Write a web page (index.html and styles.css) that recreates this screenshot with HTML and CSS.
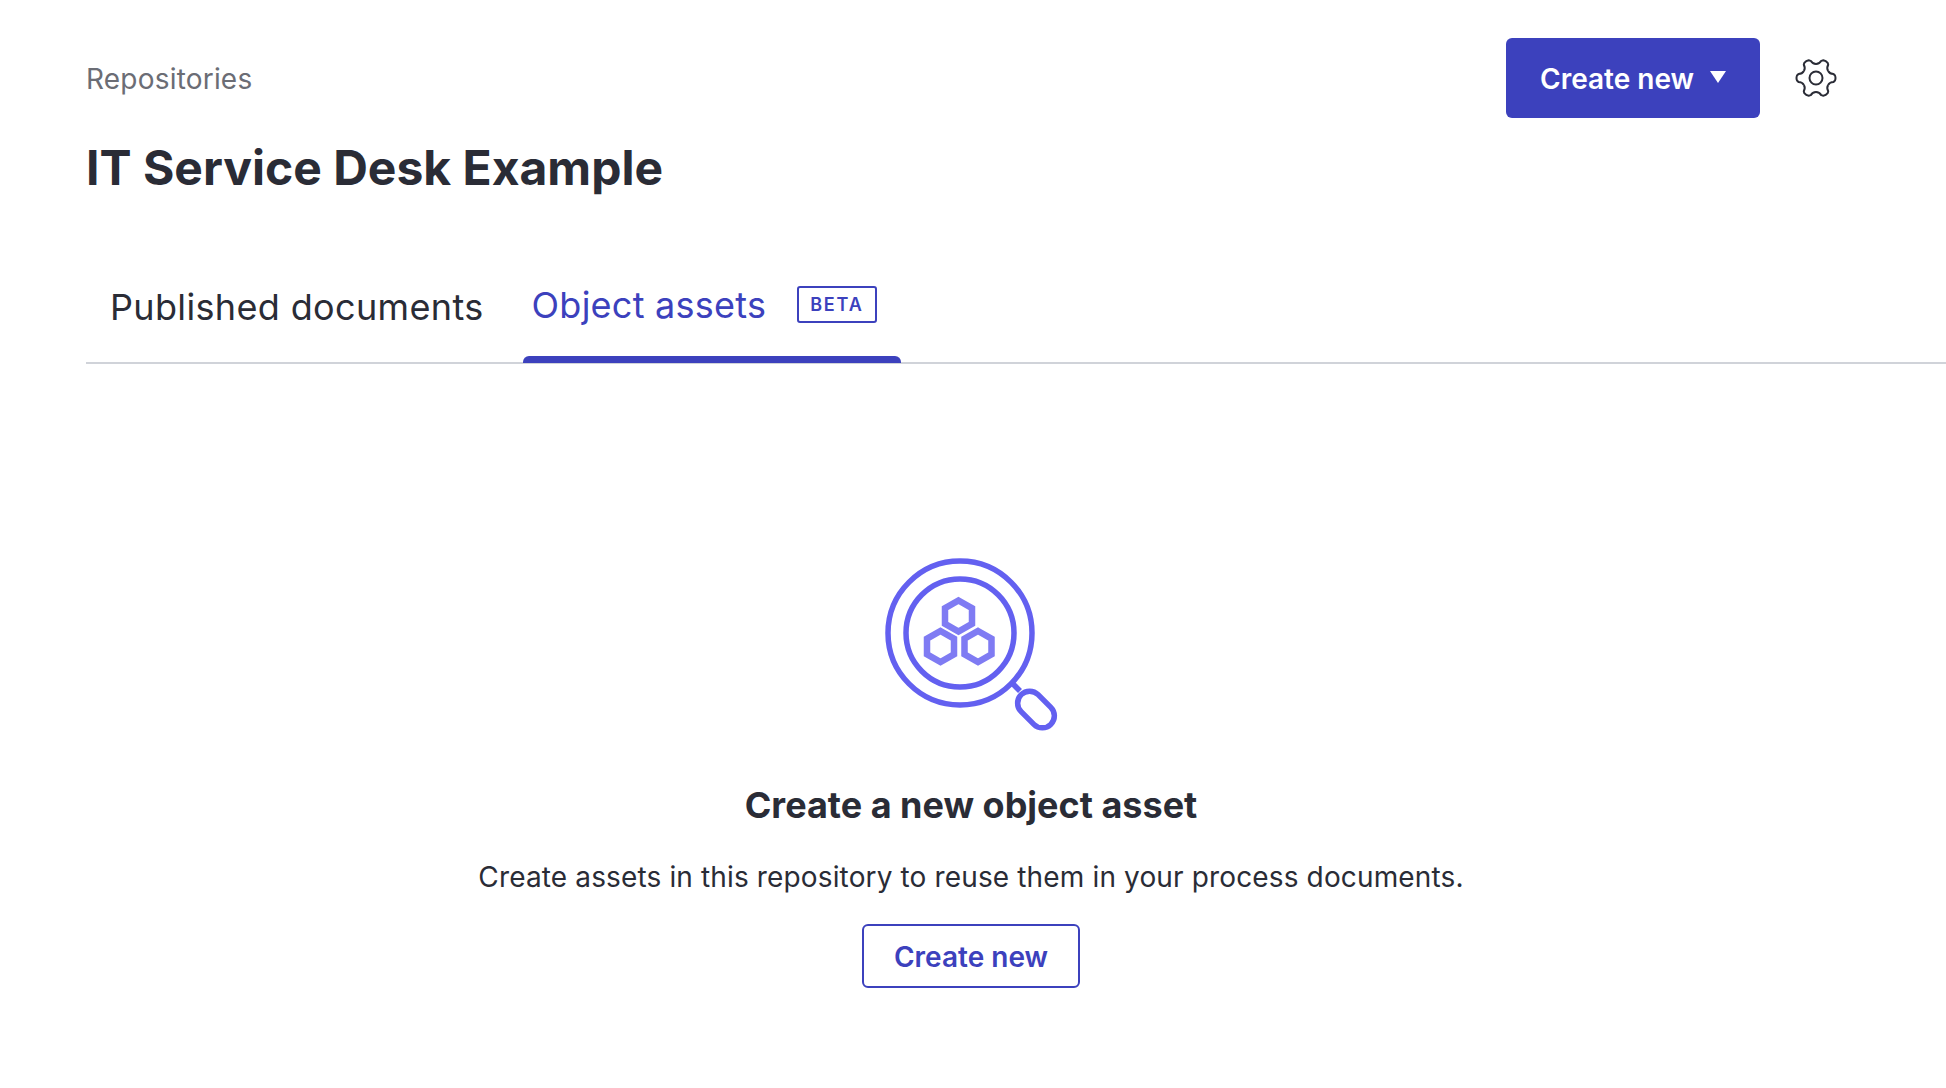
FILE: index.html
```html
<!DOCTYPE html>
<html lang="en">
<head>
    <title>IT Service Desk Example</title>
    <link rel="stylesheet" href="styles.css">
</head>
<body>

<header class="page-header">
    <div class="header-text">
        <a class="breadcrumb" href="#">Repositories</a>
        <h1>IT Service Desk Example</h1>
    </div>
    <div class="header-actions">
        <button class="btn-primary" type="button">
            Create new
            <svg class="caret" width="16" height="14" viewBox="0 0 16 14"><path d="M0 1h16L8 13z" fill="#fff"/></svg>
        </button>
        <button class="btn-settings" type="button" aria-label="Settings">
            <svg width="42" height="42" viewBox="0 0 42 42" fill="none" stroke="#2a2c36" stroke-width="2" stroke-linejoin="round">
                <defs>
                    <path id="tooth" d="M33.100 14C34.500 16.500 36.500 17 38.500 17L40 18.500Q41 21 40 23.500L38.500 25C36.500 25 34.500 25.500 33.100 28"/>
                </defs>
                <use href="#tooth"/>
                <use href="#tooth" transform="rotate(60 21 21)"/>
                <use href="#tooth" transform="rotate(120 21 21)"/>
                <use href="#tooth" transform="rotate(180 21 21)"/>
                <use href="#tooth" transform="rotate(240 21 21)"/>
                <use href="#tooth" transform="rotate(300 21 21)"/>
                <circle cx="21" cy="21" r="6.500"/>
            </svg>
        </button>
    </div>
</header>

<nav class="tabs">
    <a class="tab" href="#">Published documents</a>
    <a class="tab active" href="#">Object assets <span class="badge">BETA</span></a>
</nav>

<main class="empty-state">
    <svg class="empty-icon" width="200" height="200" viewBox="0 0 200 200" fill="none" stroke="#6360f0" stroke-width="5.500">
        <circle cx="88" cy="91" r="72"/>
        <circle cx="88" cy="91" r="54"/>
        <path d="M140 141l8 8"/>
        <rect x="143" y="155.500" width="42" height="24" rx="12" transform="rotate(45 164 167.500)"/>
        <g stroke="#7f7bf3" stroke-width="6.500" transform="translate(-1.500 -1.500)">
            <path d="M88 60l13.500 7.750v15.500L88 91l-13.500-7.750v-15.500z"/>
            <path d="M70 90.500l13.500 7.750v15.500L70 121.500l-13.500-7.750v-15.500z"/>
            <path d="M107.500 90.500l13.500 7.750v15.500l-13.500 7.750-13.500-7.750v-15.500z"/>
        </g>
    </svg>
    <h2>Create a new object asset</h2>
    <p>Create assets in this repository to reuse them in your process documents.</p>
    <button class="btn-outline" type="button">Create new</button>
</main>

</body>
</html>
```

FILE: styles.css
```css
body {
    font-family: Inter, "Liberation Sans", sans-serif;
    margin: 0;
    height: 1088px;
    overflow: hidden;
    background-color: #fff;
    color: #2a2c36;
}
.page-header {
    display: flex;
    justify-content: space-between;
    padding: 38px 109px 0 86px;
}
.breadcrumb {
    display: block;
    margin-top: 21px;
    font-size: 28px;
    line-height: 40px;
    letter-spacing: 0.2px;
    color: #6b6d75;
    text-decoration: none;
}
h1 {
    margin: 39px 0 0;
    font-size: 48px;
    line-height: 60px;
    font-weight: 700;
}
.header-actions {
    display: flex;
    align-items: flex-start;
    gap: 35px;
}
.btn-primary {
    display: flex;
    align-items: center;
    gap: 16px;
    width: 254px;
    height: 80px;
    padding: 2px 0 0 34px;
    border: none;
    border-radius: 6px;
    background-color: #3c41bd;
    color: #fff;
    font: 600 28px Inter, sans-serif;
}
.caret {
    margin-top: -5px;
}
.btn-settings {
    margin-top: 19px;
    padding: 0;
    border: none;
    background: none;
    line-height: 0;
}
.tabs {
    display: flex;
    margin: 53px 0 0 86px;
    height: 113px;
    border-bottom: 2px solid #d0d3d9;
    box-sizing: border-box;
}
.tab {
    position: relative;
    display: flex;
    align-items: center;
    height: 112px;
    font-size: 36px;
    letter-spacing: 0.35px;
    text-decoration: none;
    color: #2a2c36;
    padding: 0 39px 0 24px;
    box-sizing: border-box;
}
.tab.active {
    color: #3c41bd;
    letter-spacing: 0.25px;
    padding: 0 24px 5px 9px;
}
.tab.active::after {
    content: "";
    position: absolute;
    left: 0;
    right: 0;
    bottom: 0;
    height: 7px;
    border-radius: 6px 6px 0 0;
    background-color: #3c41bd;
}
.badge {
    margin-left: 31px;
    padding: 0 11px;
    border: 2px solid #3c41bd;
    border-radius: 3px;
    font-size: 18px;
    font-weight: 600;
    line-height: 33px;
    letter-spacing: 1.8px;
}
.empty-state {
    display: flex;
    flex-direction: column;
    align-items: center;
    padding: 0 4px 0 0;
}
.empty-icon {
    margin: 178px 0 0 2px;
}
h2 {
    margin: 41px 0 0;
    font-size: 36px;
    line-height: 44px;
    font-weight: 700;
}
.empty-state p {
    margin: 30px 0 0;
    font-size: 28px;
    line-height: 40px;
    letter-spacing: 0.14px;
}
.btn-outline {
    margin-top: 27px;
    width: 218px;
    height: 64px;
    padding: 2px 0 0;
    border: 2px solid #3c41bd;
    border-radius: 6px;
    background: #fff;
    color: #3c41bd;
    font: 600 28px Inter, sans-serif;
}
```
